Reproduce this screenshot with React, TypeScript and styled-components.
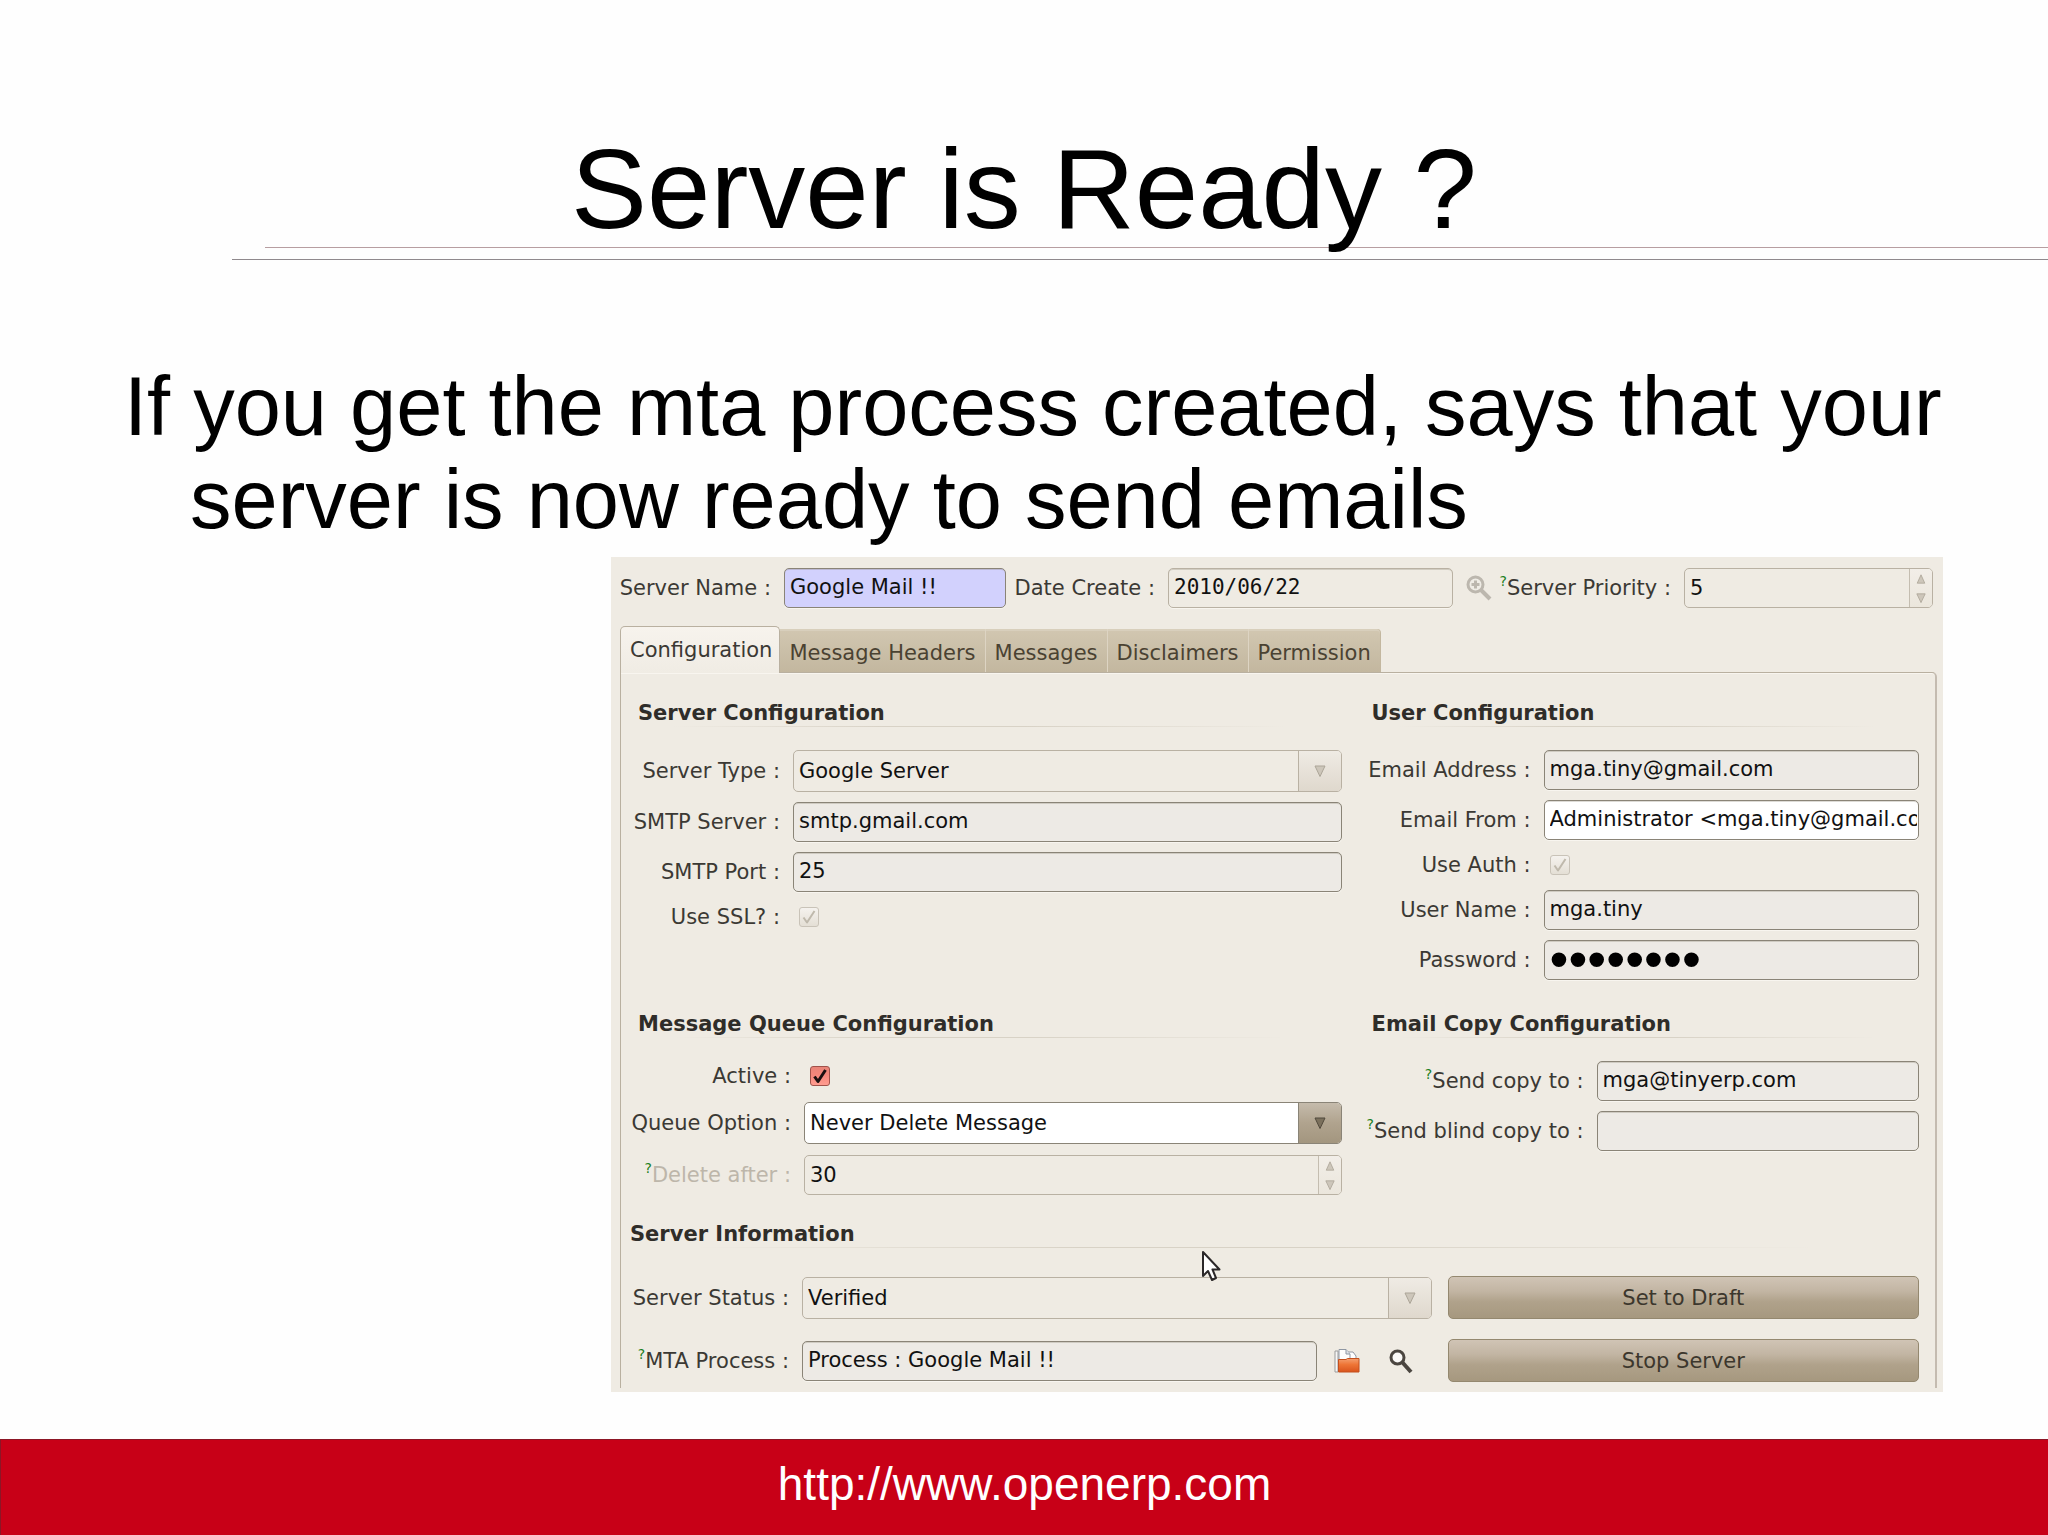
import React from "react";
import styled, { createGlobalStyle, css } from "styled-components";

const GlobalStyle = createGlobalStyle`
  *, *::before, *::after { box-sizing: border-box; }
  body { margin: 0; background: #fefefe; }
`;

const uiFont = `"DejaVu Sans", sans-serif`;
const slideFont = `"Liberation Sans", Arial, sans-serif`;

/* ---------- slide ---------- */

const Slide = styled.div`
  display: flex;
  flex-direction: column;
  min-height: 100vh;
  font-family: ${slideFont};
  color: #000;
`;

const SlideHeader = styled.header`
  padding-top: 130px;
`;

const SlideTitle = styled.h1`
  margin: 0;
  font-size: 114px;
  line-height: 117px;
  font-weight: 400;
  text-align: center;
`;

const Rule = styled.div<{ $start: number; $color: string }>`
  height: 1px;
  margin: 0 0 11px ${(p) => p.$start}px;
  background: ${(p) => p.$color};
`;

const SlideBody = styled.main`
  flex: 1;
  padding-top: 89px;
`;

const Lead = styled.p`
  margin: 0;
  padding: 0 60px 0 190px;
  text-indent: -66px;
  font-size: 83px;
  line-height: 93px;
`;

const SlideFooter = styled.footer`
  display: flex;
  align-items: center;
  justify-content: center;
  height: 96px;
  padding-bottom: 8px;
  border-top: 1px solid #8c1626;
  border-left: 1px solid #8c1626;
  background: #c80017;
`;

const SiteLink = styled.a`
  color: #fff;
  font-size: 46px;
  line-height: 52px;
  text-decoration: none;
`;

/* ---------- application window ---------- */

const Window = styled.form`
  margin: 11px 105px 0 611px;
  padding-bottom: 4px;
  background: #efebe3;
  font-family: ${uiFont};
  font-size: 21px;
  line-height: 26px;
  color: #3b3934;
`;

const TopFields = styled.div`
  display: grid;
  grid-template-columns: 147px 222fr 136px 285fr 22px 170px 249fr;
  column-gap: 13px;
  align-items: center;
  padding: 11px 10px 18px 13px;
`;

const Label = styled.label<{ $muted?: boolean }>`
  justify-self: end;
  white-space: nowrap;
  ${(p) => p.$muted && css`color: #bdb6aa;`}
`;

const Hint = styled.sup`
  font-size: 14px;
  line-height: 0;
  vertical-align: 9px;
  color: #1b7f1b;
`;

const frame = css<{ $soft?: boolean }>`
  border: 1px solid ${(p) => (p.$soft ? "#b9b1a3" : "#8a8477")};
  border-radius: 5px;
`;

const entryText = css`
  font-family: ${uiFont};
  font-size: 21px;
  line-height: 26px;
  color: #111;
`;

const Entry = styled.input<{ $soft?: boolean; $tone?: string; $mono?: boolean }>`
  ${frame}
  ${entryText}
  width: 100%;
  min-width: 0;
  height: 40px;
  margin: 0;
  padding: 0 1px 2px 5px;
  background: ${(p) => p.$tone ?? (p.$soft ? "#efebe3" : "#edeae5")};
  box-shadow: inset 0 1px 0 rgba(120, 110, 90, 0.25), 0 1px 0 #f8f5ef;
  outline: none;
  ${(p) => p.$mono && css`font-family: "DejaVu Sans Mono", monospace;`}
  &[type="password"] {
    font-family: ${slideFont};
    font-size: 54px;
    color: #000;
  }
`;

const Split = styled.div<{ $soft?: boolean; $short?: boolean }>`
  ${frame}
  display: flex;
  width: 100%;
  min-width: 0;
  height: ${(p) => (p.$short ? 40 : 42)}px;
  overflow: hidden;
  background: ${(p) => (p.$soft ? "#efebe3" : "#fff")};
`;

const Choice = styled.select`
  ${entryText}
  flex: 1;
  min-width: 0;
  margin: 0;
  padding: 0 5px;
  border: 0;
  background: transparent;
  appearance: none;
  opacity: 1;
  outline: none;
`;

const NumberEntry = styled.input`
  ${entryText}
  flex: 1;
  min-width: 0;
  margin: 0;
  padding: 0 5px;
  border: 0;
  background: transparent;
  appearance: textfield;
  outline: none;
  &::-webkit-inner-spin-button { appearance: none; margin: 0; }
`;

const ArrowCell = styled.span<{ $soft?: boolean }>`
  display: flex;
  align-items: center;
  justify-content: center;
  width: 43px;
  border-left: 1px solid ${(p) => (p.$soft ? "#b9b1a3" : "#8a8477")};
  background: ${(p) =>
    p.$soft
      ? "linear-gradient(#efebe4, #dfd8cd)"
      : "linear-gradient(#c5bbac, #b0a38e 50%, #a3967f)"};
`;

const Spinner = styled.span`
  display: flex;
  flex-direction: column;
  width: 23px;
  border-left: 1px solid #c4bdb0;
  background: linear-gradient(#f2eee8, #ebe6dc);
`;

const SpinButton = styled.button`
  display: flex;
  flex: 1;
  align-items: center;
  justify-content: center;
  padding: 0;
  border: 0;
  background: none;
`;

const Tick = styled.input<{ $live?: boolean }>`
  appearance: none;
  width: 20px;
  height: 20px;
  margin: 0 6px;
  border: 1px solid ${(p) => (p.$live ? "#a0524a" : "#c9c3b8")};
  border-radius: 3px;
  background:
    ${(p) =>
      p.$live
        ? "linear-gradient(#e88478, #f5877b 45%, #ff9c90)"
        : "linear-gradient(#f5f2ee, #e4dfd5)"};
`;

const TickBox = styled.span`
  display: grid;
  align-items: center;
  justify-items: start;
  height: 30px;
  > * { grid-area: 1 / 1; }
  > svg { margin-left: 6px; pointer-events: none; }
`;

/* ---------- tabs ---------- */

const Notebook = styled.div`
  margin: 0 6px 0 9px;
`;

const TabBar = styled.div`
  display: flex;
  align-items: flex-end;
  height: 46px;
`;

const Tab = styled.button<{ $active?: boolean }>`
  height: 43px;
  padding: 4px 9px 0;
  border: 0;
  border-right: 1px solid #ddd4c3;
  background: linear-gradient(#d2c7b1, #cabfa8 50%, #c3b79f);
  box-shadow: inset 0 2px 0 #d8cfbc;
  font-family: ${uiFont};
  font-size: 21px;
  line-height: 26px;
  color: #4a4232;
  white-space: nowrap;
  &:last-child { border-radius: 0 4px 0 0; border-right-color: #c3b79f; }
  ${(p) =>
    p.$active &&
    css`
      height: 47px;
      margin-bottom: -1px;
      padding: 0 7px 0 9px;
      border: 1px solid #b9b0a0;
      border-bottom: 0;
      border-radius: 5px 5px 0 0;
      background: linear-gradient(#f7f3ed, #f0ece4);
      box-shadow: none;
      color: #3b3934;
    `}
`;

const TabPanel = styled.div`
  padding: 27px 16px 6px 9px;
  border: 1px solid #b9b0a0;
  border-bottom: 0;
  border-right: 2px solid #c4bbb0;
  border-radius: 0 5px 0 0;
  box-shadow: inset 0 1px 0 #f8f5ef;
`;

const Groups = styled.div`
  display: grid;
  grid-template-columns: 703fr 547fr;
  column-gap: 30px;
  row-gap: 31px;
  margin-bottom: 26px;
  padding-left: 8px;
`;

const Group = styled.section`
  min-width: 0;
`;

const GroupTitle = styled.h2`
  margin: 0;
  font-size: 21px;
  line-height: 26px;
  font-weight: 700;
  color: #2f2d29;
  &::after {
    content: "";
    display: block;
    height: 1px;
    background: linear-gradient(90deg, transparent 5%, #d8d2c6 35%, #d8d2c6 55%, transparent 92%);
  }
`;

const Fields = styled.div<{ $label: number; $gap?: number }>`
  display: grid;
  grid-template-columns: ${(p) => p.$label}px 1fr;
  column-gap: 13px;
  row-gap: ${(p) => p.$gap ?? 10}px;
  align-items: center;
  margin-top: 23px;
`;

const InfoSection = styled.section`
  position: relative;
`;

const StatusArea = styled.div`
  display: flex;
  flex-direction: column;
  gap: 20px;
  margin-top: 28px;
  padding-left: 8px;
`;

const StatusRow = styled.div`
  display: grid;
  grid-template-columns: 151px 658fr 471fr;
  align-items: center;
`;

const StatusField = styled.div`
  display: flex;
  align-items: center;
  padding: 0 16px 0 13px;
`;

const IconButtons = styled.span`
  display: flex;
  flex: none;
  gap: 28px;
  padding: 0 18px 0 17px;
`;

const IconButton = styled.button`
  display: flex;
  padding: 0;
  border: 0;
  background: none;
  > svg { flex: none; }
`;

const Action = styled.button`
  height: 43px;
  padding: 0 12px;
  border: 1px solid #94886f;
  border-radius: 5px;
  background: linear-gradient(#d0c4b5, #c2b5a3 35%, #b0a28b 60%, #a6987f);
  font-family: ${uiFont};
  font-size: 21px;
  line-height: 26px;
  color: #3c372d;
`;

const CursorLayer = styled.span`
  position: absolute;
  top: 28px;
  left: 571px;
`;

/* ---------- drawings ---------- */

const Triangle = ({ up, size, soft }: { up?: boolean; size: number; soft?: boolean }) => (
  <svg width={size} height={size} viewBox="0 0 12 12" aria-hidden="true">
    <path
      d={up ? "M6 1 L10.5 11 H1.5 Z" : "M1 1 H11 L6 11.5 Z"}
      fill={soft ? "#cdc6ba" : "#7b705c"}
      stroke={soft ? "#aca598" : "#51493c"}
      strokeWidth="1"
    />
  </svg>
);

const Check = ({ live }: { live?: boolean }) => (
  <svg width="20" height="20" viewBox="0 0 20 20" aria-hidden="true">
    <path
      d="M4.5 10.5 L8 15.5 L15.5 4"
      fill="none"
      stroke={live ? "#1b1010" : "#bfb9ac"}
      strokeWidth={live ? 3 : 2}
      strokeLinejoin="round"
    />
  </svg>
);

const ZoomIcon = () => (
  <svg width="26" height="26" viewBox="0 0 26 26" aria-hidden="true">
    <circle cx="9.5" cy="9.5" r="7.5" fill="#efece5" stroke="#bcb7ae" strokeWidth="3" />
    <path d="M9.5 5.5 V13.5 M5.5 9.5 H13.5" stroke="#bcb7ae" strokeWidth="3" />
    <path d="M15 15 L24 24" stroke="#bcb7ae" strokeWidth="4" />
  </svg>
);

const FolderIcon = () => (
  <svg width="26" height="26" viewBox="0 0 26 26" aria-hidden="true">
    <defs>
      <linearGradient id="folder" x1="0" y1="0" x2="0" y2="1">
        <stop offset="0" stopColor="#f4a070" />
        <stop offset="0.45" stopColor="#ee7536" />
        <stop offset="1" stopColor="#d9541c" />
      </linearGradient>
    </defs>
    <path d="M1 24 V3 H4 V24 Z" fill="#f6f6f6" stroke="#9b9b9b" />
    <path d="M13 4 H19 L22 8 V14 H13 Z" fill="#fff" stroke="#8f97a3" />
    <path d="M5 14 V1.5 H12 L16 6 V14 Z" fill="#fdfdfd" stroke="#8f97a3" />
    <path d="M12 1.5 V6 H16" fill="#dfe3ea" stroke="#8f97a3" />
    <path d="M4.5 11.5 H12 L13.5 10.5 H25 V24 H4.5 Z" fill="url(#folder)" stroke="#c4501f" />
  </svg>
);

const SearchIcon = () => (
  <svg width="26" height="26" viewBox="0 0 26 26" aria-hidden="true">
    <circle cx="9.5" cy="9.5" r="6.5" fill="#fbfaf8" stroke="#4b4640" strokeWidth="3" />
    <path d="M14.5 14.5 L23 24" stroke="#4b4640" strokeWidth="4" />
  </svg>
);

const PointerIcon = () => (
  <svg width="22" height="34" viewBox="0 0 22 34" aria-hidden="true">
    <path
      d="M2 3 V27 L7 22 L11 31 L15 29 L11.5 20.5 H18.5 Z"
      fill="#fff"
      stroke="#2b2829"
      strokeWidth="2"
      strokeLinejoin="round"
    />
  </svg>
);

/* ---------- form parts ---------- */

type FieldProps = { id: string; label: string; hint?: boolean; muted?: boolean };

const FieldLabel = ({ id, label, hint, muted }: FieldProps) => (
  <Label htmlFor={id} $muted={muted}>
    {hint && <Hint>?</Hint>}
    {label} :
  </Label>
);

const TextField = ({
  value,
  soft,
  tone,
  mono,
  type = "text",
  ...field
}: FieldProps & { value: string; soft?: boolean; tone?: string; mono?: boolean; type?: string }) => (
  <>
    <FieldLabel {...field} />
    <Entry id={field.id} type={type} defaultValue={value} autoComplete="off" $soft={soft} $tone={tone} $mono={mono} />
  </>
);

const Dropdown = ({ id, value, soft }: { id: string; value: string; soft?: boolean }) => (
  <Split $soft={soft}>
    <Choice id={id} disabled={soft} defaultValue={value}>
      <option>{value}</option>
    </Choice>
    <ArrowCell $soft={soft} aria-hidden="true">
      <Triangle size={12} soft={soft} />
    </ArrowCell>
  </Split>
);

const NumberField = ({ value, ...field }: FieldProps & { value: number }) => (
  <>
    <FieldLabel {...field} />
    <Split $soft $short>
      <NumberEntry id={field.id} type="number" defaultValue={value} />
      <Spinner>
        <SpinButton type="button" aria-label="Increase"><Triangle up size={10} soft /></SpinButton>
        <SpinButton type="button" aria-label="Decrease"><Triangle size={10} soft /></SpinButton>
      </Spinner>
    </Split>
  </>
);

const TickField = ({ live, ...field }: FieldProps & { live?: boolean }) => (
  <>
    <FieldLabel {...field} />
    <TickBox>
      <Tick id={field.id} type="checkbox" defaultChecked disabled={!live} $live={live} />
      <Check live={live} />
    </TickBox>
  </>
);

const tabs = ["Configuration", "Message Headers", "Messages", "Disclaimers", "Permission"];

export default function App() {
  return (
    <Slide>
      <GlobalStyle />
      <SlideHeader>
        <SlideTitle>Server is Ready ?</SlideTitle>
        <Rule $start={265} $color="#b79ea1" />
        <Rule $start={232} $color="#8f898d" />
      </SlideHeader>

      <SlideBody>
        <Lead>If you get the mta process created, says that your server is now ready to send emails</Lead>

        <Window onSubmit={(e) => e.preventDefault()}>
          <TopFields>
            <TextField id="name" label="Server Name" value="Google Mail !!" tone="#d2d1fd" />
            <TextField id="date" label="Date Create" value="2010/06/22" soft mono />
            <IconButton type="button" aria-label="Pick a date"><ZoomIcon /></IconButton>
            <NumberField id="priority" label="Server Priority" hint value={5} />
          </TopFields>

          <Notebook>
            <TabBar role="tablist">
              {tabs.map((tab, i) => (
                <Tab key={tab} type="button" role="tab" aria-selected={i === 0} $active={i === 0}>
                  {tab}
                </Tab>
              ))}
            </TabBar>

            <TabPanel role="tabpanel">
              <Groups>
                <Group>
                  <GroupTitle>Server Configuration</GroupTitle>
                  <Fields $label={142}>
                    <FieldLabel id="type" label="Server Type" />
                    <Dropdown id="type" value="Google Server" soft />
                    <TextField id="smtp" label="SMTP Server" value="smtp.gmail.com" />
                    <TextField id="port" label="SMTP Port" value="25" />
                    <TickField id="ssl" label="Use SSL?" />
                  </Fields>
                </Group>

                <Group>
                  <GroupTitle>User Configuration</GroupTitle>
                  <Fields $label={159}>
                    <TextField id="address" label="Email Address" value="mga.tiny@gmail.com" />
                    <TextField id="from" label="Email From" value="Administrator <mga.tiny@gmail.com>" tone="#fff" />
                    <TickField id="auth" label="Use Auth" />
                    <TextField id="user" label="User Name" value="mga.tiny" />
                    <TextField id="password" label="Password" value="mga.tiny" type="password" />
                  </Fields>
                </Group>

                <Group>
                  <GroupTitle>Message Queue Configuration</GroupTitle>
                  <Fields $label={153} $gap={11}>
                    <TickField id="active" label="Active" live />
                    <FieldLabel id="queue" label="Queue Option" />
                    <Dropdown id="queue" value="Never Delete Message" />
                    <NumberField id="delete" label="Delete after" hint muted value={30} />
                  </Fields>
                </Group>

                <Group>
                  <GroupTitle>Email Copy Configuration</GroupTitle>
                  <Fields $label={212}>
                    <TextField id="copy" label="Send copy to" hint value="mga@tinyerp.com" />
                    <TextField id="blind" label="Send blind copy to" hint value="" />
                  </Fields>
                </Group>
              </Groups>

              <InfoSection>
                <GroupTitle>Server Information</GroupTitle>
                <StatusArea>
                  <StatusRow>
                    <FieldLabel id="status" label="Server Status" />
                    <StatusField>
                      <Dropdown id="status" value="Verified" soft />
                    </StatusField>
                    <Action type="button">Set to Draft</Action>
                  </StatusRow>
                  <StatusRow>
                    <FieldLabel id="mta" label="MTA Process" hint />
                    <StatusField>
                      <Entry id="mta" type="text" defaultValue="Process : Google Mail !!" />
                      <IconButtons>
                        <IconButton type="button" aria-label="Open process"><FolderIcon /></IconButton>
                        <IconButton type="button" aria-label="Search process"><SearchIcon /></IconButton>
                      </IconButtons>
                    </StatusField>
                    <Action type="button">Stop Server</Action>
                  </StatusRow>
                </StatusArea>
                <CursorLayer><PointerIcon /></CursorLayer>
              </InfoSection>
            </TabPanel>
          </Notebook>
        </Window>
      </SlideBody>

      <SlideFooter>
        <SiteLink href="http://www.openerp.com">http://www.openerp.com</SiteLink>
      </SlideFooter>
    </Slide>
  );
}
